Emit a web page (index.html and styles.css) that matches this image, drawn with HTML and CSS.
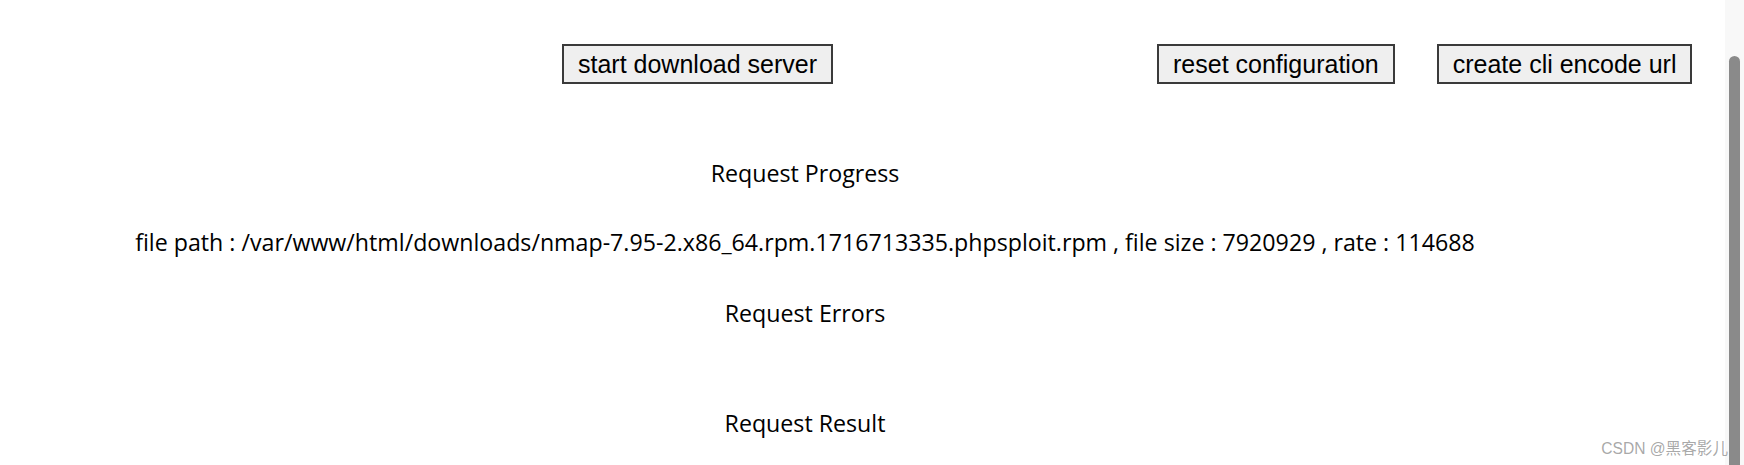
FILE: index.html
```html
<!DOCTYPE html>
<html>
<head>
<meta charset="utf-8">
<link rel="stylesheet" href="styles.css">
</head>
<body>
<div class="window">
  <main class="page">
    <div class="toolbar">
      <button class="btn btn-start">start download server</button>
      <button class="btn btn-reset">reset configuration</button>
      <button class="btn btn-cli">create cli encode url</button>
    </div>
    <section class="panel">
      <div class="title title-progress">Request Progress</div>
      <div class="line line-progress">file path : /var/www/html/downloads/nmap-7.95-2.x86_64.rpm.1716713335.phpsploit.rpm , file size : 7920929 , rate : 114688</div>
      <div class="title title-errors">Request Errors</div>
      <div class="title title-result">Request Result</div>
    </section>
  </main>
  <div class="scrollbar"><div class="thumb"></div></div>
  <div class="watermark">CSDN @黑客影儿</div>
</div>
</body>
</html>
```
FILE: styles.css
```css
html, body {
  margin: 0;
  padding: 0;
  background: #ffffff;
  overflow: hidden;
}
.window {
  position: relative;
  display: flex;
  width: 1744px;
  height: 465px;
  overflow: hidden;
}
.page {
  flex: 1;
  min-width: 0;
}
.toolbar {
  display: flex;
  align-items: flex-start;
  padding-top: 44px;
  padding-left: 562px;
}
.btn {
  font-family: "Liberation Sans", Arial, sans-serif;
  font-size: 25px;
  line-height: 28px;
  color: #000;
  background: #efefef;
  border: 2px solid #3a3a3a;
  border-radius: 0;
  padding: 4px 14px;
  margin: 0;
  white-space: nowrap;
}
.btn-reset { margin-left: 324px; }
.btn-cli { margin-left: 42px; }
.panel {
  width: 1610px;
  text-align: center;
  font-family: "Open Sans", "Noto Sans", sans-serif;
  font-size: 23.2px;
  line-height: 32px;
  color: #000;
}
.title-progress { margin-top: 73px; }
.line-progress { margin-top: 37px; white-space: nowrap; }
.title-errors { margin-top: 39px; }
.title-result { margin-top: 78px; }
.scrollbar {
  width: 19px;
  flex: none;
  background: #f8f8f8;
  display: flex;
  justify-content: center;
  padding-top: 56px;
}
.thumb {
  width: 11px;
  height: 440px;
  background: #8a8a8a;
  border-radius: 6px;
}
.watermark {
  position: absolute;
  right: 16px;
  bottom: 7px;
  font-family: "Liberation Sans", "Noto Sans CJK SC", sans-serif;
  font-size: 15.6px;
  color: rgba(130, 130, 130, 0.7);
  white-space: nowrap;
}
```
